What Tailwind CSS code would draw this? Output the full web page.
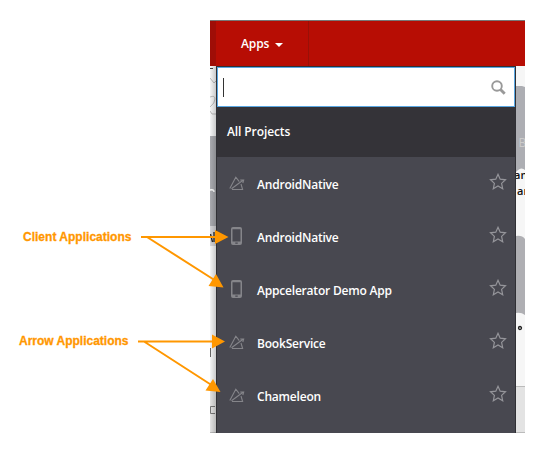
<!DOCTYPE html>
<html lang="en">
<head>
<meta charset="utf-8">
<title>Apps</title>
<script src="https://cdn.jsdelivr.net/npm/@tailwindcss/browser@4"></script>
</head>
<body class="bg-white">
<svg class="hidden">
  <symbol id="arrow" viewBox="0 0 16 15"><path d="M.8 12.500 6.800 1.200 10.300 5.600M12 8 13.600 13.500H3M2.500 12.800 14 4.300M11.200 4H14.700L13.800 7" fill="none" stroke="#85858a" stroke-width="1.100"/></symbol>
  <symbol id="phone" viewBox="0 0 11 18"><path fill-rule="evenodd" fill="#85858a" d="M2 0h7a2 2 0 0 1 2 2v14a2 2 0 0 1-2 2H2a2 2 0 0 1-2-2V2a2 2 0 0 1 2-2ZM1.500 2.300v12.200h8V2.300ZM4.300 15.500v1.200h2.400v-1.200Z"/></symbol>
  <symbol id="star" viewBox="0 0 18 17"><path d="m9 1.300 2.200 4.900 5.300.6-3.900 3.600 1.100 5.300L9 13l-4.700 2.700 1.100-5.300L1.500 6.800l5.300-.6Z" fill="none" stroke="#95959a" stroke-width="1.200"/></symbol>
</svg>
<main class="relative h-[453px] w-[545px] overflow-hidden pt-5 font-['Open_Sans','Noto_Sans',sans-serif] text-xs font-semibold text-white">
  <div class="ml-[210px] h-[413px] w-[315px] overflow-hidden">
    <header class="flex h-[46px] border-t border-[#777] bg-[#b70d04]">
      <div class="w-1.5 bg-[#9f0d07]"></div>
      <div class="flex w-[93px] items-center border-r border-[#991007] pl-[25px]">
        <span class="tracking-[-0.1px]">Apps</span>
        <svg class="mt-[3px] ml-[6px] h-1 w-2" viewBox="0 0 8 4"><path d="M0 0h8L4 4Z" fill="#fff"/></svg>
      </div>
    </header>
    <div class="flex h-[367px]">
      <svg class="h-[367px] w-1.5 shrink-0" viewBox="0 0 6 367">
        <defs><linearGradient id="ls"><stop offset="0" stop-color="#000" stop-opacity="0"/><stop offset="1" stop-color="#000" stop-opacity=".18"/></linearGradient></defs>
        <path d="M0 0h6v367H0Z" fill="#f5f6f7"/>
        <path d="M0 0h6v1H0Z" fill="#fff"/><path d="M0 2.500h3" stroke="#444"/>
        <path d="M0 12 4 17 6 15M0 31q5-2 5 2T0 41M0 45l2 3h4" fill="none" stroke="#bbb"/>
        <path d="M0 70h6v90H0Z" fill="#aaabb0"/><path d="M0 124q4-1 4 2" fill="none" stroke="#fff" stroke-width="1.500"/>
        <path d="M0 160h6v20H0Z" fill="#d5d5d8"/>
        <path d="M.5 168l2 8M4 166v10" stroke="#222" stroke-width="1.300"/><path d="M.5 282v9" stroke="#666"/>
        <path d="M0 321h6v46H0Z" fill="#e3e3e3"/><path d="M0 321h6M0 366.500h6" stroke="#bbb"/>
        <path d="M5 340.500H.5v7H5" fill="none" stroke="#777"/>
        <path d="M0 0h6v367H0Z" fill="url(#ls)"/>
      </svg>
      <section class="h-[367px] w-[300px] shrink-0 overflow-hidden border-x border-t border-[#303035] bg-[#484850]">
        <div class="flex h-10 items-center justify-between border border-[#5aa7e2] bg-white pr-[8px] pl-[5px]">
          <span class="mt-px h-[19px] w-px bg-[#333]"></span>
          <svg class="mt-px h-[15px] w-[15px]" viewBox="0 0 15 15" fill="none" stroke="#999"><circle cx="6" cy="6" r="4.800" stroke-width="1.900"/><path d="m9.500 9.500 4.200 4.200" stroke-width="2.900"/></svg>
        </div>
        <h2 class="flex h-[50px] items-center bg-[#343338] pl-[10px] tracking-[-0.1px]">All Projects</h2>
        <ul class="tracking-[-0.2px]">
          <li class="flex h-[53px] items-center pr-2 pl-3"><svg class="h-[15px] w-4"><use href="#arrow"/></svg><span class="ml-3 grow pt-[2px]">AndroidNative</span><svg class="mb-1 h-[17px] w-[18px]"><use href="#star"/></svg></li>
          <li class="flex h-[53px] items-center pr-2 pl-[14px]"><svg class="mb-[2px] h-[18px] w-[11px]"><use href="#phone"/></svg><span class="ml-[15px] grow pt-[2px]">AndroidNative</span><svg class="mb-1 h-[17px] w-[18px]"><use href="#star"/></svg></li>
          <li class="flex h-[53px] items-center pr-2 pl-[14px]"><svg class="mb-[2px] h-[18px] w-[11px]"><use href="#phone"/></svg><span class="ml-[15px] grow pt-[2px]">Appcelerator Demo App</span><svg class="mb-1 h-[17px] w-[18px]"><use href="#star"/></svg></li>
          <li class="flex h-[53px] items-center pr-2 pl-3"><svg class="h-[15px] w-4"><use href="#arrow"/></svg><span class="ml-3 grow pt-[2px]">BookService</span><svg class="mb-1 h-[17px] w-[18px]"><use href="#star"/></svg></li>
          <li class="flex h-[53px] items-center pr-2 pl-3"><svg class="h-[15px] w-4"><use href="#arrow"/></svg><span class="ml-3 grow pt-[2px]">Chameleon</span><svg class="mb-1 h-[17px] w-[18px]"><use href="#star"/></svg></li>
        </ul>
      </section>
      <svg class="h-[367px] w-[9px] shrink-0" viewBox="0 0 9 367">
        <path d="M0 0h9v367H0Z" fill="#f6f6f6"/>
        <path d="M0 20h6l3 1v83q-4-4-9 2Z" fill="#adaeb3"/><path d="M0 170q6-1 9 3v76q-4-3-9-2Z" fill="#afafb3"/>
        <text x="2.500" y="81" font-size="12" font-weight="400" fill="#ccc">B</text>
        <g fill="#111" font-size="11"><text x="-2" y="113">an</text><text x="1" y="129">ar</text></g>
        <circle cx="4" cy="262" r="1.500" fill="#ddd" stroke="#222" stroke-width="1.300"/>
        <path d="M0 320h9v47H0Z" fill="#e3e3e3"/><path d="M0 320.500h9M0 366.500h9" stroke="#bbb"/>
      </svg>
    </div>
  </div>
  <svg class="absolute inset-0 h-[453px] w-[545px]" viewBox="0 0 545 453" stroke="#ff9700" fill="#ff9700">
    <path stroke-width="2" fill="none" d="M141 237H218M147 237 216 281M138 341.500H215M144 341.500 213 386"/>
    <path stroke="none" d="m215 230 13.500 7-13.500 7ZM216 274l7.500 13.500-15-1.500ZM212 334.500l13 7-13 7ZM213 379l7.500 13-15-1.500Z"/>
    <g stroke-width=".3" font-family="'Liberation Sans',Arial,sans-serif" font-size="12" font-weight="700"><text x="23" y="241" textLength="108.500">Client Applications</text><text x="19" y="345" textLength="109.500">Arrow Applications</text></g>
  </svg>
</main>
</body>
</html>
